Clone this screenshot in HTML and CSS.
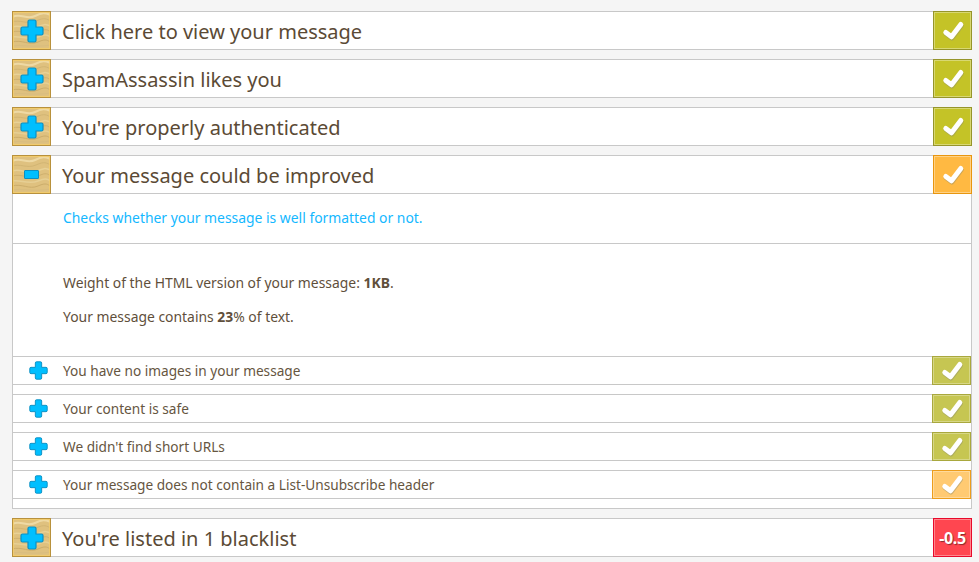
FILE: index.html
```html
<!DOCTYPE html>
<html lang="en">
<head>
<meta charset="utf-8">
<title>Message report</title>
<link rel="stylesheet" href="styles.css">
</head>
<body>
<svg class="defs" width="0" height="0" aria-hidden="true">
  <defs>
    <symbol id="wood" viewBox="0 0 37 37" preserveAspectRatio="none">
      <rect width="37" height="37" fill="#dfc17f"/>
      <g fill="none" stroke-linecap="round">
        <path d="M-1 5C8 1 14 8 22 4S32 1 38 3" stroke="#eed9a4" stroke-width="2"/>
        <path d="M-1 10C7 7 14 13 23 9S33 7 38 9" stroke="#d2b573" stroke-width="1"/>
        <path d="M-1 15C8 12 15 19 24 15S33 13 38 14" stroke="#e8d196" stroke-width="1.500"/>
        <path d="M-1 20C9 17 16 24 25 20S34 18 38 20" stroke="#cfb06e" stroke-width="1"/>
        <path d="M-1 25C7 23 15 29 25 25S34 24 38 25" stroke="#e6cf94" stroke-width="1.500"/>
        <path d="M-1 30C9 27 16 34 25 30S34 29 38 30" stroke="#ccad6b" stroke-width="1"/>
        <path d="M-1 34C9 32 18 36 38 33" stroke="#d9bd7f" stroke-width="1"/>
      </g>
    </symbol>
    <symbol id="plus" viewBox="0 0 24 24">
      <path d="M8 2.500Q8 1 9.500 1H14.500Q16 1 16 2.500V8H21.500Q23 8 23 9.500V14.500Q23 16 21.500 16H16V21.500Q16 23 14.500 23H9.500Q8 23 8 21.500V16H2.500Q1 16 1 14.500V9.500Q1 8 2.500 8H8Z" fill="#00bfff" stroke="#0c8fc2" stroke-width="1.200"/>
    </symbol>
    <symbol id="check" viewBox="0 0 28 28">
      <path d="M6.800 15.500L12.500 19.800L21.800 7.500" fill="none" stroke="#8d8d70" stroke-opacity=".45" stroke-width="5" stroke-linecap="round" stroke-linejoin="round" transform="translate(.4 1.200)"/>
      <path d="M6.800 15.500L12.500 19.800L21.800 7.500" fill="none" stroke="#fff" stroke-width="5" stroke-linecap="round" stroke-linejoin="round"/>
    </symbol>
  </defs>
</svg>

<main class="report">
  <section class="item">
    <header class="head">
      <span class="toggle"><svg class="wood"><use href="#wood"/></svg><svg class="glyph"><use href="#plus"/></svg></span>
      <h2 class="title">Click here to view your message</h2>
      <span class="badge badge-ok"><svg class="tick"><use href="#check"/></svg></span>
    </header>
  </section>
  <section class="item">
    <header class="head">
      <span class="toggle"><svg class="wood"><use href="#wood"/></svg><svg class="glyph"><use href="#plus"/></svg></span>
      <h2 class="title">SpamAssassin likes you</h2>
      <span class="badge badge-ok"><svg class="tick"><use href="#check"/></svg></span>
    </header>
  </section>
  <section class="item">
    <header class="head">
      <span class="toggle"><svg class="wood"><use href="#wood"/></svg><svg class="glyph"><use href="#plus"/></svg></span>
      <h2 class="title">You're properly authenticated</h2>
      <span class="badge badge-ok"><svg class="tick"><use href="#check"/></svg></span>
    </header>
  </section>
  <section class="item">
    <header class="head">
      <span class="toggle"><svg class="wood"><use href="#wood"/></svg><span class="minus"></span></span>
      <h2 class="title">Your message could be improved</h2>
      <span class="badge badge-warn"><svg class="tick"><use href="#check"/></svg></span>
    </header>
    <div class="panel">
      <p class="intro">Checks whether your message is well formatted or not.</p>
      <div class="details">
        <p>Weight of the HTML version of your message: <b>1KB</b>.</p>
        <p>Your message contains <b>23</b>% of text.</p>
      </div>
      <ul class="checks">
        <li class="check">
          <svg class="check-plus"><use href="#plus"/></svg>
          <span class="check-text">You have no images in your message</span>
          <span class="minibadge mini-ok"><svg class="tick"><use href="#check"/></svg></span>
        </li>
        <li class="check">
          <svg class="check-plus"><use href="#plus"/></svg>
          <span class="check-text">Your content is safe</span>
          <span class="minibadge mini-ok"><svg class="tick"><use href="#check"/></svg></span>
        </li>
        <li class="check">
          <svg class="check-plus"><use href="#plus"/></svg>
          <span class="check-text">We didn't find short URLs</span>
          <span class="minibadge mini-ok"><svg class="tick"><use href="#check"/></svg></span>
        </li>
        <li class="check">
          <svg class="check-plus"><use href="#plus"/></svg>
          <span class="check-text">Your message does not contain a List-Unsubscribe header</span>
          <span class="minibadge mini-warn"><svg class="tick"><use href="#check"/></svg></span>
        </li>
      </ul>
    </div>
  </section>
  <section class="item">
    <header class="head">
      <span class="toggle"><svg class="wood"><use href="#wood"/></svg><svg class="glyph"><use href="#plus"/></svg></span>
      <h2 class="title">You're listed in 1 blacklist</h2>
      <span class="badge badge-bad">-0.5</span>
    </header>
  </section>
</main>
</body>
</html>
```

FILE: styles.css
```css
* { box-sizing: border-box; }
html, body { margin: 0; height: 100%; overflow: hidden; }
body {
  background: #f5f5f5;
  color: #5b4a35;
  font-family: "Noto Sans", "Open Sans", sans-serif;
}
.defs { position: absolute; }
.report {
  display: flex;
  flex-direction: column;
  gap: 9px;
  width: 960px;
  margin-left: 12px;
  padding-top: 11px;
}
.head {
  display: flex;
  align-items: center;
  height: 39px;
  background: #fff;
  border-top: 1px solid #c8c8c8;
  border-bottom: 1px solid #c8c8c8;
}
.toggle {
  position: relative;
  isolation: isolate;
  display: flex;
  align-items: center;
  justify-content: center;
  flex: none;
  width: 39px;
  height: 39px;
  margin: -1px 0;
  border: 1px solid #b8913d;
  outline: 1px solid rgba(245, 205, 105, .8);
  outline-offset: -2px;
}
.wood { position: absolute; inset: 0; z-index: -1; width: 100%; height: 100%; }
.glyph { position: relative; width: 24px; height: 24px; }
.minus {
  position: relative;
  width: 15px;
  height: 9px;
  background: #00bfff;
  border: 1px solid #0c8fc2;
  border-radius: 1px;
}
.title {
  flex: 1;
  margin: 2px 0 0 11px;
  font-size: 20px;
  font-weight: 400;
  line-height: 1;
  white-space: nowrap;
}
.badge {
  display: flex;
  align-items: center;
  justify-content: center;
  flex: none;
  width: 39px;
  height: 39px;
  margin: -1px 0;
  border: 1px solid;
  outline: 1px solid rgba(255, 255, 255, .35);
  outline-offset: -2px;
}
.badge-ok { background: #c4c327; border-color: #96952a; }
.badge-warn { background: #ffb942; border-color: #e8960f; }
.badge-bad {
  background: #ff4650;
  border-color: #e8092a;
  color: #fff;
  font-size: 16px;
  font-weight: 700;
  letter-spacing: -.3px;
  text-shadow: 1px 1px 1px #8a2a2a;
}
.tick { width: 28px; height: 28px; }
.panel {
  background: #fff;
  border: solid #c8c8c8;
  border-width: 0 1px 1px;
  padding-bottom: 9px;
}
.intro {
  margin: 0;
  height: 50px;
  padding: 14px 0 0 50px;
  color: #14b8ff;
  font-size: 13.9px;
  line-height: 20px;
  border-bottom: 1px solid #c8c8c8;
}
.details {
  height: 112px;
  padding: 29px 0 0 50px;
  font-size: 13.9px;
  line-height: 20px;
  color: #5f4f3b;
}
.details p { margin: 0 0 14px; }
.details b { font-weight: 700; }
.checks {
  display: flex;
  flex-direction: column;
  gap: 9px;
  margin: 0;
  padding: 0;
  list-style: none;
}
.check {
  display: flex;
  align-items: center;
  height: 29px;
  border-top: 1px solid #c8c8c8;
  border-bottom: 1px solid #c8c8c8;
}
.check-plus { flex: none; width: 19px; height: 19px; margin-left: 16px; }
.check-text {
  flex: 1;
  margin-left: 15px;
  font-size: 13.65px;
  color: #66563f;
}
.minibadge {
  display: flex;
  align-items: center;
  justify-content: center;
  flex: none;
  width: 39px;
  height: 29px;
  margin: -1px 0;
  border: 1px solid;
  outline: 1px solid rgba(255, 255, 255, .3);
  outline-offset: -2px;
}
.mini-ok { background: #c6c652; border-color: #a9a83e; }
.mini-warn { background: #ffca72; border-color: #ec9d1c; }
```
